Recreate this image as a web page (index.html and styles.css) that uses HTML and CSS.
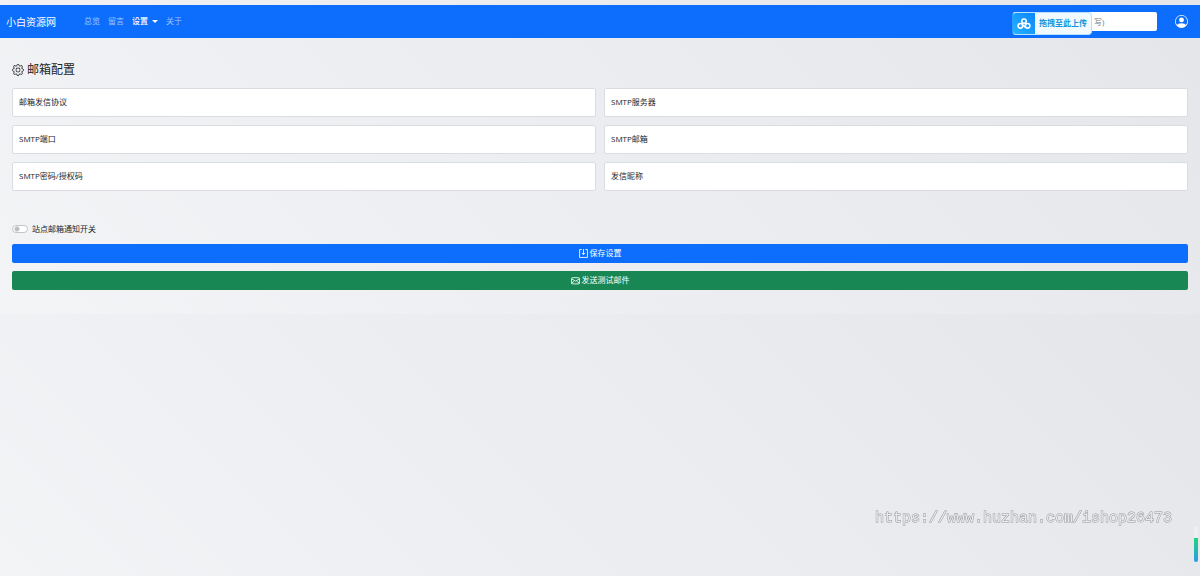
FILE: index.html
```html
<!DOCTYPE html>
<html lang="zh-CN">
<head>
  <meta charset="UTF-8">
  <meta name="viewport" content="width=device-width, initial-scale=1">
  <title>邮箱配置</title>
  <link rel="stylesheet" href="styles.css">
</head>
<body>

  <nav class="navbar">
    <a class="brand" href="#">小白资源网</a>
    <div class="nav-links">
      <a href="#">总览</a>
      <a href="#">留言</a>
      <button type="button" class="active">设置<span class="caret"></span></button>
      <a href="#">关于</a>
    </div>
    <div class="search">
      <input type="search" placeholder="写)" aria-label="写)">
      <button type="button" class="upload">
        <span class="upload-icon">
          <svg width="14" height="12" viewBox="0 0 14 12" fill="none" stroke="#fff" stroke-width="1.6">
            <circle cx="7" cy="3.2" r="2.2"/>
            <circle cx="3.4" cy="7.8" r="2.3"/>
            <path d="M5.500 6.800L8.900 9.600"/>
            <circle cx="10.6" cy="7.8" r="2.3"/>
          </svg>
        </span>
        <span class="upload-text">拖拽至此上传</span>
      </button>
    </div>
    <a class="user" href="#" aria-label="用户">
      <svg width="13" height="13" viewBox="0 0 16 16" fill="currentColor">
        <path d="M11 6a3 3 0 1 1-6 0 3 3 0 0 1 6 0"/>
        <path fill-rule="evenodd" d="M0 8a8 8 0 1 1 16 0A8 8 0 0 1 0 8m8-7a7 7 0 0 0-5.468 11.37C3.242 11.226 4.805 10 8 10s4.757 1.225 5.468 2.37A7 7 0 0 0 8 1"/>
      </svg>
    </a>
  </nav>

  <main class="container">
    <h1>
      <svg width="12" height="12" viewBox="0 0 16 16" fill="currentColor">
        <path d="M8 4.754a3.246 3.246 0 1 0 0 6.492 3.246 3.246 0 0 0 0-6.492M5.754 8a2.246 2.246 0 1 1 4.492 0 2.246 2.246 0 0 1-4.492 0"/>
        <path d="M9.796 1.343c-.527-1.79-3.065-1.79-3.592 0l-.094.319a.873.873 0 0 1-1.255.52l-.292-.16c-1.64-.892-3.433.902-2.54 2.541l.159.292a.873.873 0 0 1-.52 1.255l-.319.094c-1.79.527-1.79 3.065 0 3.592l.319.094a.873.873 0 0 1 .52 1.255l-.16.292c-.892 1.64.901 3.434 2.541 2.54l.292-.159a.873.873 0 0 1 1.255.52l.094.319c.527 1.79 3.065 1.79 3.592 0l.094-.319a.873.873 0 0 1 1.255-.52l.292.16c1.64.893 3.434-.902 2.54-2.541l-.159-.292a.873.873 0 0 1 .52-1.255l.319-.094c1.79-.527 1.79-3.065 0-3.592l-.319-.094a.873.873 0 0 1-.52-1.255l.16-.292c.893-1.64-.902-3.433-2.541-2.54l-.292.159a.873.873 0 0 1-1.255-.52zm-2.633.283c.246-.835 1.428-.835 1.674 0l.094.319a1.873 1.873 0 0 0 2.693 1.115l.291-.16c.764-.415 1.6.42 1.184 1.185l-.159.292a1.873 1.873 0 0 0 1.116 2.692l.318.094c.835.246.835 1.428 0 1.674l-.319.094a1.873 1.873 0 0 0-1.115 2.693l.16.291c.415.764-.42 1.6-1.185 1.184l-.291-.159a1.873 1.873 0 0 0-2.693 1.116l-.094.318c-.246.835-1.428.835-1.674 0l-.094-.319a1.873 1.873 0 0 0-2.692-1.115l-.292.16c-.764.415-1.6-.42-1.184-1.185l.159-.291A1.873 1.873 0 0 0 1.945 8.93l-.319-.094c-.835-.246-.835-1.428 0-1.674l.319-.094A1.873 1.873 0 0 0 3.06 4.377l-.16-.292c-.415-.764.42-1.6 1.185-1.184l.292.159a1.873 1.873 0 0 0 2.692-1.115z"/>
      </svg>
      邮箱配置
    </h1>

    <form>
      <div class="fields">
        <div class="field"><input type="text" id="protocol"><label for="protocol">邮箱发信协议</label></div>
        <div class="field"><input type="text" id="server"><label for="server">SMTP服务器</label></div>
        <div class="field"><input type="text" id="port"><label for="port">SMTP端口</label></div>
        <div class="field"><input type="text" id="mail"><label for="mail">SMTP邮箱</label></div>
        <div class="field"><input type="password" id="password"><label for="password">SMTP密码/授权码</label></div>
        <div class="field"><input type="text" id="nickname"><label for="nickname">发信昵称</label></div>
      </div>

      <div class="switch">
        <input type="checkbox" role="switch" id="notify">
        <label for="notify">站点邮箱通知开关</label>
      </div>

      <div class="buttons">
        <button type="button" class="btn btn-primary">
          <svg width="9" height="9" viewBox="0 0 16 16" fill="none" stroke="currentColor" stroke-width="1.5">
            <path d="M5 1H1v14h14V1h-4M8 0v10M5 7l3 3 3-3"/>
          </svg>
          保存设置
        </button>
        <button type="button" class="btn btn-success">
          <svg width="9" height="9" viewBox="0 0 16 16" fill="none" stroke="currentColor" stroke-width="1.5">
            <rect x="1" y="3" width="14" height="11" rx="1.5"/>
            <path d="M1 5l7 4 7-4M1 13l5-4M15 13l-5-4"/>
          </svg>
          发送测试邮件
        </button>
      </div>
    </form>
  </main>

  <div class="watermark">https://www.huzhan.com/ishop26473</div>
  <div class="meter"></div>

</body>
</html>
```
FILE: styles.css
```css
* {
  box-sizing: border-box;
}

body {
  margin: 0;
  padding: 5px 0 24px;
  font-family: "Open Sans", "Noto Sans CJK SC", sans-serif;
  font-size: 8px;
  line-height: 12px;
  color: #212529;
  background: linear-gradient(45deg, #f3f4f6, #e5e6ea);
}

a {
  color: inherit;
  text-decoration: none;
}

button,
input {
  font: inherit;
}

svg {
  flex: none;
}

.navbar {
  display: flex;
  align-items: center;
  height: 33px;
  padding: 0 12px 0 6px;
  background: #0d6efd;
  color: #fff;
}

.brand {
  font-size: 10px;
}

.nav-links {
  display: flex;
  align-items: center;
  gap: 8px;
  margin-left: 28px;
  padding-bottom: 1px;
  color: rgba(255, 255, 255, 0.6);
}

.nav-links button {
  display: flex;
  align-items: center;
  gap: 4px;
  padding: 0;
  border: none;
  background: none;
  color: #fff;
  font-weight: 500;
}

.caret {
  border: 3px solid transparent;
  border-top-color: #fff;
  border-bottom: none;
}

.search {
  position: relative;
  width: 144px;
  margin-left: auto;
}

.search input {
  display: block;
  width: 100%;
  height: 19px;
  padding: 0 6px 1px 81px;
  border: none;
  border-radius: 2px;
  background: #fff;
  outline: none;
}

.search input::placeholder {
  color: #6c757d;
}

/* floats over the search box */
.upload {
  position: absolute;
  top: 0;
  left: -1px;
  display: flex;
  align-items: center;
  height: 23px;
  padding: 0;
  border: 1px solid #b5e2ff;
  border-left-color: #28a0ff;
  border-radius: 4px;
  background: #f1faff;
  color: #1296db;
  font-weight: 700;
  white-space: nowrap;
  overflow: hidden;
}

.upload-icon {
  display: flex;
  align-items: center;
  justify-content: center;
  width: 22px;
  height: 23px;
  background: linear-gradient(45deg, #28b4ff, #0a84ff);
}

.upload-text {
  padding: 0 4px 1px;
}

.user {
  display: flex;
  margin-left: 18px;
}

.container {
  padding: 23px 12px 0;
}

h1 {
  display: flex;
  align-items: center;
  gap: 3px;
  margin: 0 0 9px;
  font-size: 12px;
  font-weight: 400;
  line-height: 18px;
}

.fields {
  display: grid;
  grid-template-columns: 1fr 1fr;
  gap: 8px;
}

.field {
  display: grid;
  align-items: center;
}

.field input,
.field label {
  grid-area: 1 / 1;
}

.field input {
  width: 100%;
  height: 29px;
  padding: 8px 6px;
  border: 1px solid #d9dce1;
  border-radius: 2px;
  background: #fff;
}

.field label {
  padding: 0 0 1px 7px;
  pointer-events: none;
}

.switch {
  display: flex;
  align-items: center;
  gap: 4px;
  margin: 32px 0 9px;
}

.switch input {
  appearance: none;
  width: 16px;
  height: 8px;
  margin: 0;
  border: 1px solid #c4c6c9;
  border-radius: 4px;
  background: #fff radial-gradient(circle at 4px 3px, #bfbfbf 2px, transparent 3px);
}

.switch input:checked {
  background: #0d6efd;
}

.buttons {
  display: grid;
  gap: 8px;
}

.btn {
  display: flex;
  align-items: center;
  justify-content: center;
  gap: 2px;
  height: 19px;
  padding: 0 0 1px;
  border: none;
  border-radius: 2px;
  color: #fff;
}

.btn-primary {
  background: #0d6efd;
}

.btn-success {
  background: #198754;
}

.watermark {
  position: fixed;
  right: 28px;
  bottom: 47px;
  font-family: "Liberation Mono", monospace;
  font-size: 15px;
  line-height: 20px;
  color: #e9eaed;
  -webkit-text-stroke: 1px #969698;
  paint-order: stroke fill;
}

.meter {
  position: fixed;
  right: 2px;
  bottom: 14px;
  width: 4px;
  height: 36px;
  border-radius: 2px;
  background: linear-gradient(#eeeff1 12px, #1fd67c 12px, #2b9be8);
}
```
